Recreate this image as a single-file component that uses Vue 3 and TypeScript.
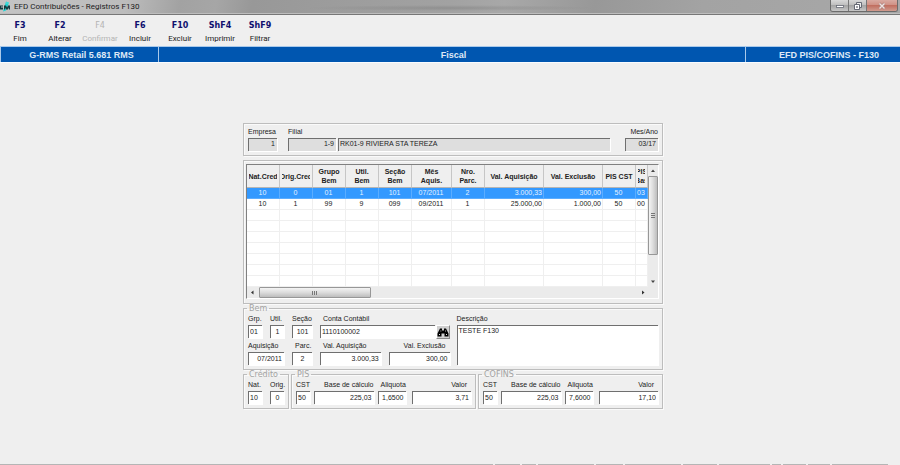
<script setup lang="ts">
import { ref } from 'vue'

interface Command {
  key: string
  label: string
  disabled?: boolean
}

interface Row {
  cells: string[]
}

interface Column {
  lines: string[]
  kind: string
}

const commands: Command[] = [
  { key: 'F3', label: 'Fim' },
  { key: 'F2', label: 'Alterar' },
  { key: 'F4', label: 'Confirmar', disabled: true },
  { key: 'F6', label: 'Incluir' },
  { key: 'F10', label: 'Excluir' },
  { key: 'ShF4', label: 'Imprimir' },
  { key: 'ShF9', label: 'Filtrar' },
]

const columns: Column[] = [
  { lines: ['Nat.Cred'], kind: 'code' },
  { lines: ['Orig.Cred'], kind: 'code' },
  { lines: ['Grupo', 'Bem'], kind: 'code' },
  { lines: ['Util.', 'Bem'], kind: 'code' },
  { lines: ['Seção', 'Bem'], kind: 'code' },
  { lines: ['Mês', 'Aquis.'], kind: 'month' },
  { lines: ['Nro.', 'Parc.'], kind: 'code' },
  { lines: ['Val. Aquisição'], kind: 'money' },
  { lines: ['Val. Exclusão'], kind: 'money' },
  { lines: ['PIS CST'], kind: 'code' },
  { lines: ['PIS', 'Bas'], kind: 'cut' },
]

const rows: Row[] = [
  { cells: ['10', '0', '01', '1', '101', '07/2011', '2', '3.000,33', '300,00', '50', '03'] },
  { cells: ['10', '1', '99', '9', '099', '09/2011', '1', '25.000,00', '1.000,00', '50', '00'] },
  ...Array.from({ length: 7 }, () => ({ cells: Array<string>(11).fill('') })),
]

const selected = ref(0)

const statusCells = [493, 25, 14, 56, 27, 56, 34, 51, 9, 23, 22, 56]
</script>

<template>
  <div class="window">
    <header class="titlebar">
      <svg class="app-icon" viewBox="0 0 11 10" aria-hidden="true">
        <path d="M6 0l3 1-3 8-3 1z" fill="#21d3d3" />
        <path d="M0 4h3v1H1v1h2v2H0zM4 4h2l1 2 1-2h2v4H9V6L8 8H6L5 6v2H4z" fill="#143c40" />
        <path d="M6 1h3v1H6z" fill="#5fe0dd" />
      </svg>
      <h1 class="title">EFD Contribuições - Registros F130</h1>
      <div class="window-buttons">
        <button type="button" class="win" aria-label="Minimizar">
          <svg viewBox="0 0 10 8"><rect x="1.500" y="3.500" width="7" height="2" fill="#fff" stroke="#666a75" stroke-width=".8" /></svg>
        </button>
        <button type="button" class="win" aria-label="Restaurar">
          <svg viewBox="0 0 10 8">
            <path d="M3.500 .5h5v5h-5z" fill="#eee" stroke="#666a75" />
            <path d="M1.500 2.500h5v5h-5z" fill="#fff" stroke="#666a75" />
            <path d="M3.500 4.500h1v1h-1z" fill="#777" stroke="#666a75" stroke-width=".6" />
          </svg>
        </button>
        <button type="button" class="win close" aria-label="Fechar">
          <svg viewBox="0 0 10 8">
            <path d="M2.500 1.500l5 5m0-5l-5 5" stroke="#a9807c" stroke-width="2.600" />
            <path d="M2.500 1.500l5 5m0-5l-5 5" stroke="#efe3e1" stroke-width="1.400" />
          </svg>
        </button>
      </div>
    </header>

    <nav class="commands">
      <button v-for="c in commands" :key="c.key" type="button" class="command" :disabled="c.disabled">
        <b>{{ c.key }}</b>
        <span>{{ c.label }}</span>
      </button>
    </nav>

    <div class="banner">
      <span class="side">G-RMS Retail 5.681 RMS</span>
      <span class="middle">Fiscal</span>
      <span class="side right">EFD PIS/COFINS - F130</span>
    </div>

    <main class="body">
      <form class="form" @submit.prevent>
        <section class="panel head">
          <div class="field w-emp">
            <label for="empresa">Empresa</label>
            <input id="empresa" class="num off" value="1" readonly />
          </div>
          <div class="field w-fil">
            <label for="filial">Filial</label>
            <input id="filial" class="num off" value="1-9" readonly />
          </div>
          <div class="field grow">
            <input class="off" aria-label="Nome da filial" value="RK01-9 RIVIERA STA TEREZA" readonly />
          </div>
          <div class="field w-mes">
            <label for="mes" class="end">Mes/Ano</label>
            <input id="mes" class="num off" value="03/17" readonly />
          </div>
        </section>

        <section class="panel list">
          <div class="grid-box">
            <div class="grid-main">
              <table>
                <colgroup>
                  <col v-for="(c, i) in columns" :key="i" :class="c.kind" />
                </colgroup>
                <thead>
                  <tr>
                    <th v-for="(c, i) in columns" :key="i">
                      <div class="head-text"><span v-for="l in c.lines" :key="l">{{ l }}</span></div>
                    </th>
                  </tr>
                </thead>
                <tbody>
                  <tr v-for="(r, i) in rows" :key="i" :class="{ selected: i === selected }">
                    <td v-for="(cell, j) in r.cells" :key="j" :class="columns[j].kind">{{ cell }}</td>
                  </tr>
                </tbody>
              </table>
              <div class="vbar">
                <svg class="arrow" viewBox="0 0 10 10"><path d="M3 6.500h4L5 4z" fill="#444" /></svg>
                <div class="vthumb"><i></i><i></i><i></i></div>
                <div class="vspace"></div>
                <svg class="arrow" viewBox="0 0 10 10"><path d="M3 4h4L5 6.500z" fill="#444" /></svg>
              </div>
            </div>
            <div class="hbar">
              <svg class="arrow" viewBox="0 0 10 10"><path d="M6.500 3v4L4 5z" fill="#333" /></svg>
              <div class="hthumb"><i></i><i></i><i></i></div>
              <div class="hspace"></div>
              <svg class="arrow" viewBox="0 0 10 10"><path d="M4 3v4l2.500-2z" fill="#333" /></svg>
            </div>
          </div>
        </section>

        <fieldset class="group">
          <legend>Bem</legend>
          <div class="bem">
            <div class="bem-left">
              <div class="line">
                <div class="field w-2"><label for="grp">Grp.</label><input id="grp" value="01" /></div>
                <div class="field w-2"><label for="util">Util.</label><input id="util" class="mid" value="1" /></div>
                <div class="field w-3"><label for="secao">Seção</label><input id="secao" class="mid" value="101" /></div>
                <div class="field grow conta">
                  <label for="conta" class="inset">Conta Contábil</label>
                  <div class="lookup">
                    <input id="conta" value="1110100002" />
                    <button type="button" class="find" aria-label="Pesquisar conta">
                      <svg viewBox="0 0 12 10">
                        <path d="M3 1h2v2h2V1h2l1 2 1.500 3v3H7.500V6h-3v3H.5V6L2 3z" fill="#000" />
                        <path d="M2 6.500h1v1H2zM9 6.500h1v1H9zM3.500 3h.8v1h-.8zM8 3h.8v1H8z" fill="#ddd" />
                      </svg>
                    </button>
                  </div>
                </div>
              </div>
              <div class="line">
                <div class="field w-date"><label for="aquis">Aquisição</label><input id="aquis" class="num" value="07/2011" /></div>
                <div class="field w-3"><label for="parc" class="inset">Parc.</label><input id="parc" class="mid" value="2" /></div>
                <div class="field grow"><label for="vaq" class="inset">Val. Aquisição</label><input id="vaq" class="num" value="3.000,33" /></div>
                <div class="field grow"><label for="vex" class="end back">Val. Exclusão</label><input id="vex" class="num" value="300,00" /></div>
              </div>
            </div>
            <div class="field desc">
              <label for="desc">Descrição</label>
              <textarea id="desc">TESTE F130</textarea>
            </div>
          </div>
        </fieldset>

        <div class="bottom">
          <fieldset class="group">
            <legend>Crédito</legend>
            <div class="line">
              <div class="field w-2"><label for="nat">Nat.</label><input id="nat" value="10" /></div>
              <div class="field w-2"><label for="orig">Orig.</label><input id="orig" class="mid" value="0" /></div>
            </div>
          </fieldset>
          <fieldset class="group tax">
            <legend>PIS</legend>
            <div class="line tight">
              <div class="field w-2"><label for="pcst">CST</label><input id="pcst" value="50" /></div>
              <div class="field grow"><label for="pbase" class="end">Base de cálculo</label><input id="pbase" class="num" value="225,03" /></div>
              <div class="field w-rate"><label for="paliq" class="inset">Aliquota</label><input id="paliq" class="num" value="1,6500" /></div>
              <div class="field grow"><label for="pval" class="end back">Valor</label><input id="pval" class="num" value="3,71" /></div>
            </div>
          </fieldset>
          <fieldset class="group tax">
            <legend>COFINS</legend>
            <div class="line tight">
              <div class="field w-2"><label for="ccst">CST</label><input id="ccst" value="50" /></div>
              <div class="field grow"><label for="cbase" class="end">Base de cálculo</label><input id="cbase" class="num" value="225,03" /></div>
              <div class="field w-rate"><label for="caliq" class="inset">Aliquota</label><input id="caliq" class="num" value="7,6000" /></div>
              <div class="field grow"><label for="cval" class="end back">Valor</label><input id="cval" class="num" value="17,10" /></div>
            </div>
          </fieldset>
        </div>
      </form>
    </main>

    <footer class="status">
      <span v-for="(w, i) in statusCells" :key="i" :style="{ width: w + 'px' }"></span>
    </footer>
  </div>
</template>

<style>
body {
  margin: 0;
  background: #efefef;
}
</style>

<style scoped>
* {
  box-sizing: border-box;
}
.window {
  display: flex;
  flex-direction: column;
  min-height: 100vh;
  background: #efefef;
  color: #222;
  font: 7px/10px "Liberation Sans", Arial, sans-serif;
  overflow: hidden;
}
button,
input,
textarea {
  font: inherit;
  color: inherit;
  margin: 0;
  border-radius: 0;
}
.titlebar {
  display: flex;
  align-items: flex-start;
  height: 15px;
  padding-right: 2px;
  border-bottom: 1px solid #777;
  box-shadow: inset 0 -1px #bdbdbd;
  background:
    radial-gradient(closest-side, rgba(110, 110, 110, 0.35), transparent) 50% 5px / 290px 6px no-repeat,
    linear-gradient(100deg, #c4c4c4 0, #bcbcbc 14%, #a2a2a2 20%, #a6a6a6 24%, #989898 28%, #a2a2a2 50%, #a8a8a8 56%, #989898 66%, #a3a3a3 78%, #a8a8a8 100%);
}
.app-icon {
  width: 11px;
  height: 13px;
  margin-right: 3px;
}
.title {
  flex: 1;
  margin: 0;
  color: #1c1c1c;
  font: 8px/14px Roboto, "Noto Sans", sans-serif;
}
.window-buttons {
  display: flex;
  border: 1px solid #6b6b6b;
  border-top: 0;
  border-radius: 0 0 3px 3px;
  overflow: hidden;
}
.win {
  display: flex;
  align-items: center;
  justify-content: center;
  width: 18px;
  height: 11px;
  padding: 0;
  border: 0;
  border-right: 1px solid #777;
  background: linear-gradient(#d8d8d8, #bcbcbc 50%, #a5a5a5 50%, #c6c6c6);
}
.win svg {
  width: 10px;
  height: 8px;
}
.close {
  width: 30px;
  border-right: 0;
  background: linear-gradient(#d9aaa1, #cf8e82 50%, #c16f60 50%, #d09b8f);
}
.commands {
  display: flex;
  height: 31px;
}
.command {
  display: flex;
  flex-direction: column;
  align-items: center;
  width: 40px;
  padding: 5px 0 0;
  border: 0;
  background: none;
  font: 8px/13px Roboto, "Noto Sans", sans-serif;
  white-space: nowrap;
}
.command b {
  color: #10106e;
  font: bold 8px/12px "DejaVu Sans", sans-serif;
}
.command:disabled,
.command:disabled b {
  color: #b4b4b4;
}
.command:disabled b {
  font-weight: normal;
}
.banner {
  display: flex;
  height: 17px;
  border: solid #f8fbff;
  border-width: 1px 0;
  border-top-color: #a9c9ea;
  background: #0056b0;
  color: #dfe9f6;
  font-weight: bold;
  font-size: 9px;
  line-height: 16px;
  text-align: center;
}
.side {
  width: 159px;
  padding-left: 4px;
  border: solid #a9c9ea;
  border-width: 0 1px;
}
.right {
  width: 155px;
  padding-left: 12px;
  border-right: 0;
}
.middle {
  flex: 1;
  padding-left: 3px;
}
.body {
  flex: 1;
  display: flex;
  justify-content: center;
  padding: 60px 0 40px 6px;
}
.form {
  width: 100%;
  max-width: 420px;
  display: flex;
  flex-direction: column;
}
.panel,
.group {
  border: 1px solid #bdbdbd;
  box-shadow: inset 1px 1px #fafafa, 1px 1px #fafafa;
}
.head {
  display: flex;
  align-items: flex-end;
  height: 33px;
  padding: 0 4px 4px;
  margin-bottom: 4px;
}
.field {
  display: flex;
  flex-direction: column;
  flex: none;
  min-width: 0;
}
.grow {
  flex: 1 1 0;
}
.field label {
  height: 12px;
  line-height: 12px;
  white-space: nowrap;
}
.field .end {
  align-self: flex-end;
}
.field .inset {
  padding-left: 3px;
}
.field .back {
  padding-right: 4px;
}
input,
textarea {
  width: 100%;
  height: 13px;
  padding: 0 1px;
  border: solid #6f6f6f;
  border-width: 1px 0 0 1px;
  box-shadow: 1px 1px #fff;
  background: #fff;
  outline: 0;
}
input {
  padding-bottom: 1px;
}
.num {
  padding-right: 2px;
  text-align: right;
}
.mid {
  text-align: center;
}
.off {
  padding-bottom: 3px;
  background: #dedede;
}
.w-emp {
  width: 29px;
  margin-right: 11px;
}
.w-fil {
  width: 48px;
  margin-right: 2px;
}
.w-mes {
  width: 33px;
  margin-left: 15px;
}
.list {
  padding: 3px 3px 4px 2px;
}
.grid-box {
  border: 1px solid #808080;
  border-right-color: #fff;
  border-bottom-color: #fff;
  background: #fff;
}
.grid-main {
  display: flex;
}
table {
  width: calc(100% - 10px);
  border-collapse: separate;
  border-spacing: 0;
  table-layout: fixed;
}
col.code {
  width: 33px;
}
col.month {
  width: 40px;
}
col.cut {
  width: 12px;
}
th {
  height: 23px;
  padding: 0 2px;
  border-right: 1px solid #c6c6c6;
  border-bottom: 1px solid #b5b5b5;
  background: #efefef;
}
.head-text {
  display: flex;
  flex-direction: column;
  align-items: center;
  overflow: hidden;
  line-height: 9px;
  white-space: nowrap;
}
td {
  height: 11px;
  padding: 0 1px 0 0;
  border-right: 1px solid #efefef;
  border-bottom: 1px solid #efefef;
  line-height: 10px;
  text-align: center;
  white-space: nowrap;
  overflow: hidden;
}
td.money {
  text-align: right;
}
.selected td {
  background: #3399ff;
  border-color: #5badff;
  color: #e4f1ff;
}
.vbar {
  display: flex;
  flex-direction: column;
  flex: none;
  width: 10px;
  background: #ebebeb;
}
.arrow {
  flex: none;
  width: 10px;
  height: 11px;
}
.vthumb {
  display: flex;
  flex-direction: column;
  align-items: center;
  justify-content: center;
  gap: 1px;
  flex: 78;
  border: 1px solid #979797;
  border-radius: 1px;
  background: linear-gradient(90deg, #f4f4f4, #dcdcdc 50%, #bdbdbd);
}
.vthumb i {
  width: 4px;
  height: 1px;
  background: #777;
}
.vspace {
  flex: 21;
}
.hbar {
  display: flex;
  padding-right: 10px;
  height: 11px;
  background: #ebebeb;
}
.hthumb {
  display: flex;
  align-items: center;
  justify-content: center;
  gap: 1px;
  flex: 110;
  margin-left: 2px;
  border: 1px solid #979797;
  border-radius: 1px;
  background: linear-gradient(#f4f4f4, #dcdcdc 50%, #bdbdbd);
}
.hthumb i {
  width: 1px;
  height: 4px;
  background: #777;
}
.hspace {
  flex: 268;
}
.group {
  min-width: 0;
  margin: 0;
  padding: 0 4px 4px;
}
.group legend {
  height: 9px;
  margin-left: -1px;
  padding: 0 2px;
  color: #a3a3a3;
  font: 8px/9px "DejaVu Sans", sans-serif;
}
.bem {
  display: flex;
  gap: 7px;
}
.bem-left,
.desc {
  flex: 1 1 0;
}
.bem-left {
  display: flex;
  flex-direction: column;
  gap: 1px;
}
.line {
  display: flex;
  gap: 8px;
}
.tight {
  gap: 4px;
}
.w-2 {
  width: 14px;
}
.w-3 {
  width: 20px;
}
.w-date {
  width: 36px;
}
.w-rate {
  width: 28px;
}
.w-rate + .grow {
  margin-left: 2px;
}
.lookup {
  display: flex;
  gap: 1px;
}
.find {
  flex: none;
  width: 14px;
  height: 14px;
  padding: 0;
  border: 1px solid #fff;
  border-right-color: #888;
  border-bottom-color: #888;
  background: #d0d0d0;
}
.find svg {
  display: block;
  width: 12px;
  height: 11px;
}
textarea {
  display: block;
  flex: 1;
  resize: none;
}
.bottom {
  display: flex;
  gap: 2px;
}
.tax {
  flex: 1 1 0;
}
.status {
  display: flex;
  gap: 2px;
}
.status span {
  height: 1px;
  background: #b5b5b5;
}
</style>
